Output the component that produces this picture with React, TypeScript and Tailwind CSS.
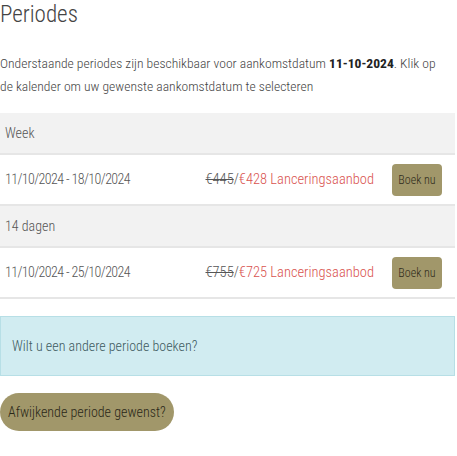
const periods = [
  { label: 'Week', range: '11/10/2024 - 18/10/2024', oldPrice: '€445', newPrice: '€428' },
  { label: '14 dagen', range: '11/10/2024 - 25/10/2024', oldPrice: '€755', newPrice: '€725' },
];

export default function App() {
  return (
    <div className="w-[455px] bg-white text-[#4a4a4a] font-['Roboto_Condensed',_'Liberation_Sans',_sans-serif] font-light">
      <h1 className="text-[23px] leading-[30px] text-[#444] font-light">Periodes</h1>

      <p className="mt-[22px] max-w-[442px] text-[13.6px] leading-[23px] text-[#444]">
        Onderstaande periodes zijn beschikbaar voor aankomstdatum{' '}
        <span className="font-bold text-[#222]">11-10-2024</span>. Klik op de kalender om uw gewenste
        aankomstdatum te selecteren
      </p>

      <div className="mt-[15px]">
        {periods.map((p) => (
          <div key={p.label}>
            <div className="h-[42px] bg-[#f2f2f2] flex items-center px-[5px] text-[14px] text-[#555] border-b-2 border-[#e6e6e6]">
              {p.label}
            </div>
            <div className="h-[51px] flex items-center pl-[5px] pr-[13px] text-[14.5px] text-[#555] border-b-2 border-[#e6e6e6]">
              <span className="flex-1 text-[14px] tracking-[-0.6px]">{p.range}</span>
              <span className="mr-[18px]">
                <span className="line-through text-[#555]">{p.oldPrice}</span>
                <span className="text-[#555]">/</span>
                <span className="text-[#d9534f]">{p.newPrice} Lanceringsaanbod</span>
              </span>
              <button className="w-[50px] h-[32px] rounded-[4px] bg-[#a1976a] text-[12px] font-light text-[#2f2b1a]">
                Boek nu
              </button>
            </div>
          </div>
        ))}
      </div>

      <div className="mt-[17px] h-[60px] bg-[#d1ecf1] border border-[#b7dfe6] flex items-center px-[11px] text-[14px] text-[#3e5a60]">
        Wilt u een andere periode boeken?
      </div>

      <button className="mt-[17px] h-[38px] px-[8px] rounded-full bg-[#a1976a] text-[14px] font-light text-[#2a2718]">
        Afwijkende periode gewenst?
      </button>
    </div>
  );
}
